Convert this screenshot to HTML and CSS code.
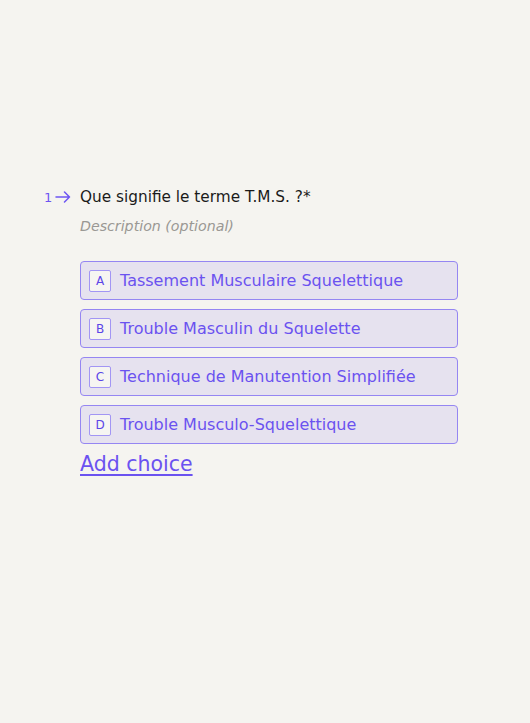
FILE: index.html
```html
<!DOCTYPE html>
<html lang="fr">
<head>
<meta charset="utf-8">
<link rel="stylesheet" href="styles.css">
</head>
<body>
<main class="page">
  <section class="question">
    <div class="q-head">
      <div class="q-index">
        <span class="q-num">1</span>
        <svg class="q-arrow" width="16" height="12" viewBox="0 0 16 12" aria-hidden="true">
          <path d="M1 6H14.5M9.5 1L14.5 6L9.5 11" fill="none" stroke="#6d55f2" stroke-width="1.5" stroke-linecap="round" stroke-linejoin="round"/>
        </svg>
      </div>
      <div class="q-body">
        <h1 class="q-title">Que signifie le terme T.M.S. ?<span class="req">*</span></h1>
        <p class="q-desc">Description (optional)</p>
        <ul class="choices">
          <li class="choice"><span class="key">A</span><span class="label">Tassement Musculaire Squelettique</span></li>
          <li class="choice"><span class="key">B</span><span class="label">Trouble Masculin du Squelette</span></li>
          <li class="choice"><span class="key">C</span><span class="label">Technique de Manutention Simplifiée</span></li>
          <li class="choice"><span class="key">D</span><span class="label">Trouble Musculo-Squelettique</span></li>
        </ul>
        <a class="add" href="#">Add choice</a>
      </div>
    </div>
  </section>
</main>
</body>
</html>
```
FILE: styles.css
```css
html, body {
  margin: 0;
  padding: 0;
  background: #f5f4f0;
}
body {
  font-family: "DejaVu Sans", "Noto Sans", sans-serif;
  width: 530px;
  height: 723px;
}
.page {
  padding: 185px 72px 0 44px;
}
.q-head {
  display: flex;
  align-items: flex-start;
}
.q-index {
  width: 36px;
  display: flex;
  align-items: center;
  gap: 3px;
  height: 24px;
  color: #6d55f2;
  font-size: 13px;
}
.q-num {
  line-height: 1;
}
.q-arrow {
  display: block;
}
.q-body {
  flex: 1;
}
.q-title {
  margin: 0;
  font-size: 15.3px;
  font-weight: 400;
  color: #1a1a1a;
  line-height: 24px;
}
.req {
  color: #1a1a1a;
}
.q-desc {
  margin: 7px 0 0;
  font-size: 14.2px;
  font-style: italic;
  color: #9a9894;
  line-height: 20px;
}
.choices {
  list-style: none;
  margin: 25px 0 0;
  padding: 0;
  display: flex;
  flex-direction: column;
  gap: 9px;
}
.choice {
  display: flex;
  align-items: center;
  gap: 9px;
  height: 39px;
  box-sizing: border-box;
  padding: 0 8px;
  background: #e6e2ef;
  border: 1px solid #9586f2;
  border-radius: 4px;
}
.key {
  width: 22px;
  height: 22px;
  box-sizing: border-box;
  border: 1px solid #a295f4;
  border-radius: 2px;
  background: #f6f5f2;
  color: #5b45e8;
  font-size: 12px;
  font-weight: 400;
  display: flex;
  align-items: center;
  justify-content: center;
}
.label {
  font-size: 16px;
  color: #6b52f0;
}
.add {
  display: inline-block;
  margin-top: 6px;
  font-size: 20.5px;
  color: #6b52f0;
  text-decoration: underline;
  text-underline-offset: 3px;
  line-height: 28px;
}
```
